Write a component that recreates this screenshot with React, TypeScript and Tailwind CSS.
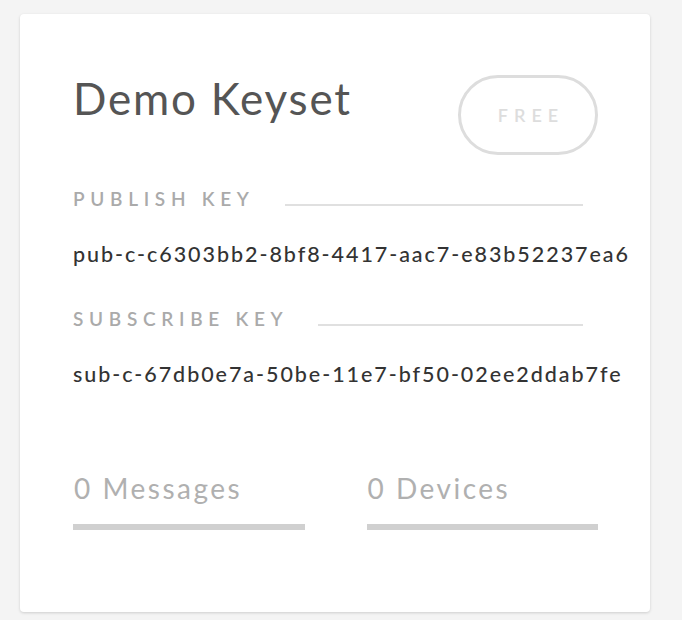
const keys = [
  { label: "PUBLISH KEY", value: "pub-c-c6303bb2-8bf8-4417-aac7-e83b52237ea6" },
  { label: "SUBSCRIBE KEY", value: "sub-c-67db0e7a-50be-11e7-bf50-02ee2ddab7fe" },
];

const stats = ["0 Messages", "0 Devices"];

export default function App() {
  return (
    <div className="min-h-[620px] w-full bg-[#f4f4f4] pt-[14px] pl-[20px] font-['Lato','Open_Sans',sans-serif]">
      <div className="w-[630px] rounded-[4px] bg-white pt-[60px] pr-[52px] pb-[82px] pl-[53px] shadow-[0_1px_3px_rgba(0,0,0,0.16)]">
        <div className="flex items-start justify-between">
          <h1 className="text-[44px] leading-[48px] tracking-[1.8px] text-[#555555]">Demo Keyset</h1>
          <div className="mt-px flex h-[80px] w-[140px] items-center justify-center rounded-full border-[3px] border-[#dddddd]">
            <span className="pl-[6px] text-[18px] font-semibold tracking-[6px] text-[#dddddd]">FREE</span>
          </div>
        </div>

        {keys.map((k, i) => (
          <div key={k.label} className={i === 0 ? "mt-[32px]" : "mt-[39px]"}>
            <div className="flex items-center pr-[15px]">
              <span className="text-[19px] leading-[24px] font-semibold tracking-[5.7px] text-[#aaaaaa]">
                {k.label}
              </span>
              <div className="mt-[12px] ml-[30px] h-[2px] flex-1 bg-[#e0e0e0]" />
            </div>
            <div className="mt-[29px] whitespace-nowrap text-[21.5px] leading-[28px] font-medium tracking-[1.95px] text-[#333333]">
              {k.value}
            </div>
          </div>
        ))}

        <div className="mt-[82px] grid grid-cols-2 gap-[62px]">
          {stats.map((s) => (
            <div key={s}>
              <div className="pl-px text-[28px] leading-[36px] tracking-[2.5px] text-[#b0b0b0]">{s}</div>
              <div className="mt-[18px] h-[6px] bg-[#d0d0d0]" />
            </div>
          ))}
        </div>
      </div>
    </div>
  );
}
